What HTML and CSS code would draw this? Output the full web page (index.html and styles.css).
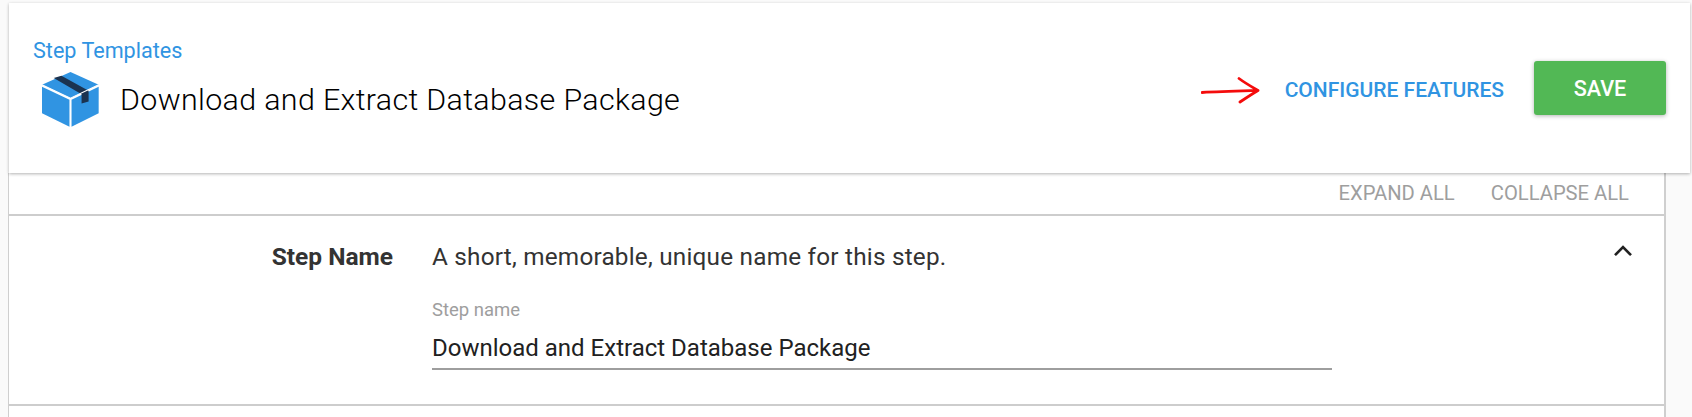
FILE: index.html
```html
<!DOCTYPE html>
<html lang="en">
<head>
<meta charset="utf-8">
<title>Download and Extract Database Package</title>
<link rel="stylesheet" href="styles.css">
</head>
<body>
<div class="page">
  <header class="header">
    <div class="heading">
      <a class="crumb">Step Templates</a>
      <div class="title-row">
        <svg class="box" viewBox="37 37 170 164" aria-hidden="true">
          <path fill="#3094e2" d="M122 37 206 75 122 115 37 75Z"/>
          <path fill="#3094e2" d="M37 81 119 120V200L37 160Z"/>
          <path fill="#3094e2" d="M206 81 125 120V200L206 160Z"/>
          <path fill="#1b3350" d="M72 55 95 48 176 93V125L155 131V103Z"/>
          <path fill="none" stroke="#fff" stroke-width="3.5" d="M37 75 122 115 206 75M122 115V200"/>
        </svg>
        <h1 class="title">Download and Extract Database Package</h1>
      </div>
    </div>
    <div class="actions">
      <svg class="arrow" viewBox="0 0 60 28" aria-hidden="true">
        <path fill="none" stroke="#f40c0c" stroke-width="2.800" stroke-linecap="round" stroke-linejoin="round" d="M1 15.500 C20 14.500 40 14 57 13.500M38 1.500C44 6 51 10 57 13.500 51 17 45 21 39 25"/>
      </svg>
      <a class="configure">Configure Features</a>
      <button class="save">Save</button>
    </div>
  </header>
  <main class="panel">
    <div class="toolbar">
      <a class="tool">Expand all</a>
      <a class="tool">Collapse all</a>
    </div>
    <section class="row">
      <h2 class="row-name">Step Name</h2>
      <div class="row-body">
        <p class="row-desc">A short, memorable, unique name for this step.</p>
        <label class="field-label" for="step-name">Step name</label>
        <input class="field" id="step-name" value="Download and Extract Database Package">
      </div>
      <svg class="chevron" viewBox="0 0 18 12" aria-hidden="true">
        <path fill="none" stroke="#212121" stroke-width="2.600" d="M1 10.200 9 2.200l8 8"/>
      </svg>
    </section>
  </main>
</div>
</body>
</html>
```

FILE: styles.css
```css
html, body {
  margin: 0;
  height: 100%;
  overflow: hidden;
}

body {
  background: #fafafa;
  font-family: Roboto, "Liberation Sans", sans-serif;
}

.page {
  display: flex;
  flex-direction: column;
  padding-top: 3px;
}

.header {
  position: relative;
  z-index: 1;
  box-sizing: border-box;
  height: 170px;
  margin: 0 2px 0 9px;
  padding: 0 24px 0 24px;
  display: flex;
  justify-content: space-between;
  align-items: flex-start;
  background: #fff;
  box-shadow: 0 1px 3px rgba(0, 0, 0, 0.3);
}

.heading {
  padding-top: 35px;
}

.crumb {
  display: block;
  color: #3094e2;
  font-size: 21.6px;
  line-height: 26px;
}

.title-row {
  display: flex;
  align-items: center;
  margin: 8px 0 0 9px;
}

.box {
  width: 57px;
  height: 55px;
  flex: none;
}

.title {
  margin: 0 0 0 21px;
  font-size: 30.4px;
  font-weight: 350;
  line-height: 40px;
  letter-spacing: 0.35px;
  color: #000;
}

.actions {
  display: flex;
  align-items: center;
  padding-top: 58px;
}

.arrow {
  width: 60px;
  height: 28px;
  margin: 6px 24px 0 0;
  flex: none;
}

.configure {
  color: #3094e2;
  font-size: 21px;
  font-weight: 500;
  text-transform: uppercase;
  margin: 4px 30px 0 0;
}

.save {
  width: 132px;
  height: 54px;
  border: 0;
  border-radius: 3px;
  background: #52b855;
  color: #fff;
  font: 500 21.6px Roboto, "Liberation Sans", sans-serif;
  text-transform: uppercase;
  box-shadow: 0 1px 4px rgba(0, 0, 0, 0.3);
}

.panel {
  margin: 0 26px 0 8px;
  background: #fff;
  border-left: 1px solid #cfcfcf;
  border-right: 2px solid #cfcfcf;
  min-height: 244px;
}

.toolbar {
  box-sizing: border-box;
  height: 43px;
  display: flex;
  justify-content: flex-end;
  align-items: center;
  gap: 36px;
  padding: 0 35px 2px 0;
  border-bottom: 2px solid #cdcdcd;
}

.tool {
  color: #9e9e9e;
  font-size: 20.2px;
  text-transform: uppercase;
}

.row {
  box-sizing: border-box;
  height: 190px;
  display: flex;
  align-items: flex-start;
  border-bottom: 2px solid #cdcdcd;
}

.row-name {
  width: 384px;
  flex: none;
  margin: 27px 0 0;
  text-align: right;
  font-size: 24.5px;
  line-height: 28px;
  font-weight: 700;
  color: #333;
}

.row-body {
  width: 900px;
  margin-left: 39px;
  flex: none;
  padding-top: 27px;
}

.row-desc {
  margin: 0;
  font-size: 24.3px;
  line-height: 28px;
  color: #333;
  letter-spacing: 0.22px;
}

.field-label {
  display: block;
  margin-top: 29px;
  font-size: 18.5px;
  line-height: 20px;
  color: #9e9e9e;
}

.field {
  box-sizing: border-box;
  display: block;
  width: 100%;
  height: 44px;
  margin-top: 6px;
  padding: 1px 0 0;
  border: 0;
  border-bottom: 2px solid #9e9e9e;
  outline: 0;
  background: transparent;
  font: 400 24px Roboto, "Liberation Sans", sans-serif;
  color: #212121;
}

.chevron {
  width: 18px;
  height: 12px;
  flex: none;
  margin: 29px 0 0 282px;
}
```
